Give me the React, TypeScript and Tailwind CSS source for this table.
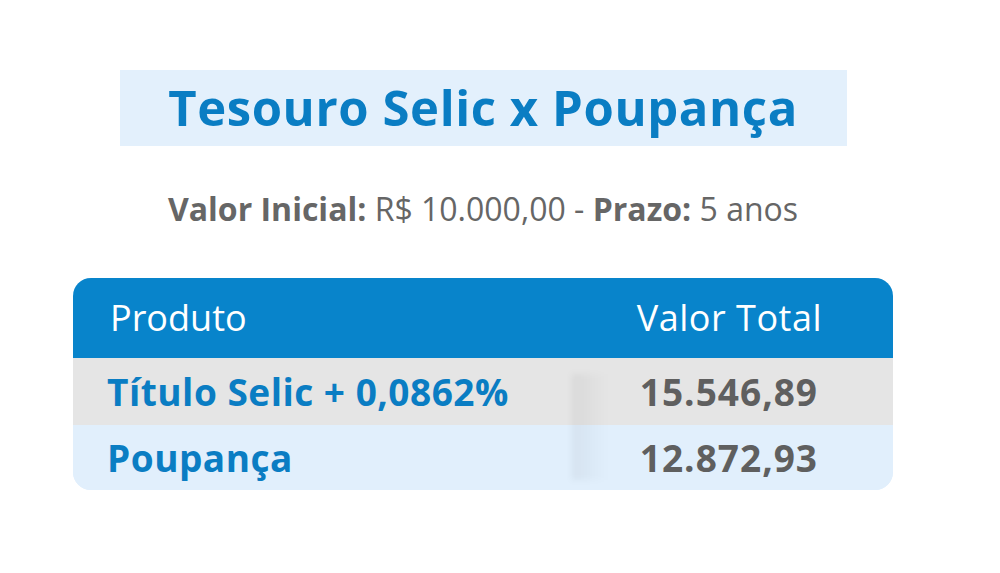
import React from "react"

const rows = [
  { name: "Título Selic + 0,0862%", value: "15.546,89", bg: "bg-[#e5e5e5]" },
  { name: "Poupança", value: "12.872,93", bg: "bg-[#e1effc]" },
]

export default function App() {
  return (
    <div className="h-[573px] w-[1000px] bg-white font-['Open_Sans',sans-serif]">
      <div className="ml-[73px] flex w-[820px] flex-col items-center pt-[70px]">
        <div className="flex h-[76px] w-[727px] items-center justify-center bg-[#e3f0fc]">
          <h1 className="text-[49px] font-bold tracking-[0.6px] text-[#0a7dc3]">Tesouro Selic x Poupança</h1>
        </div>
        <p className="mt-[47px] text-[32px] leading-[32px] text-[#666]">
          <span className="font-bold">Valor Inicial:</span> R$ 10.000,00 - <span className="font-bold">Prazo:</span> 5 anos
        </p>
        <div className="relative mt-[53px] w-full overflow-hidden rounded-[18px] bg-[#e1effc]">
          <div className="flex h-[80px] items-center bg-[#0884cb] text-[36px] text-white">
            <div className="flex-1 pl-[37px]">Produto</div>
            <div className="w-[321px] pr-[71px] text-right tracking-[0.5px]">Valor Total</div>
          </div>
          {rows.map((r, i) => (
            <div key={r.name} className={`flex items-center ${r.bg} ${i === 0 ? "h-[67px]" : "h-[65px]"}`}>
              <div className="flex-1 pl-[34px] text-[37px] font-bold tracking-[0.5px] text-[#0a7dc3]">{r.name}</div>
              <div className="flex h-full w-[321px] items-center justify-end pr-[75px] text-[37px] font-bold tracking-[1px] text-[#5f5f5f]">
                {r.value}
              </div>
            </div>
          ))}
          {/* soft shading at the left edge of the value column */}
          <div className="pointer-events-none absolute left-[499px] top-[96px] h-[106px] w-[36px] bg-gradient-to-r from-black/[0.05] to-transparent blur-[3px]" />
        </div>
      </div>
    </div>
  )
}
